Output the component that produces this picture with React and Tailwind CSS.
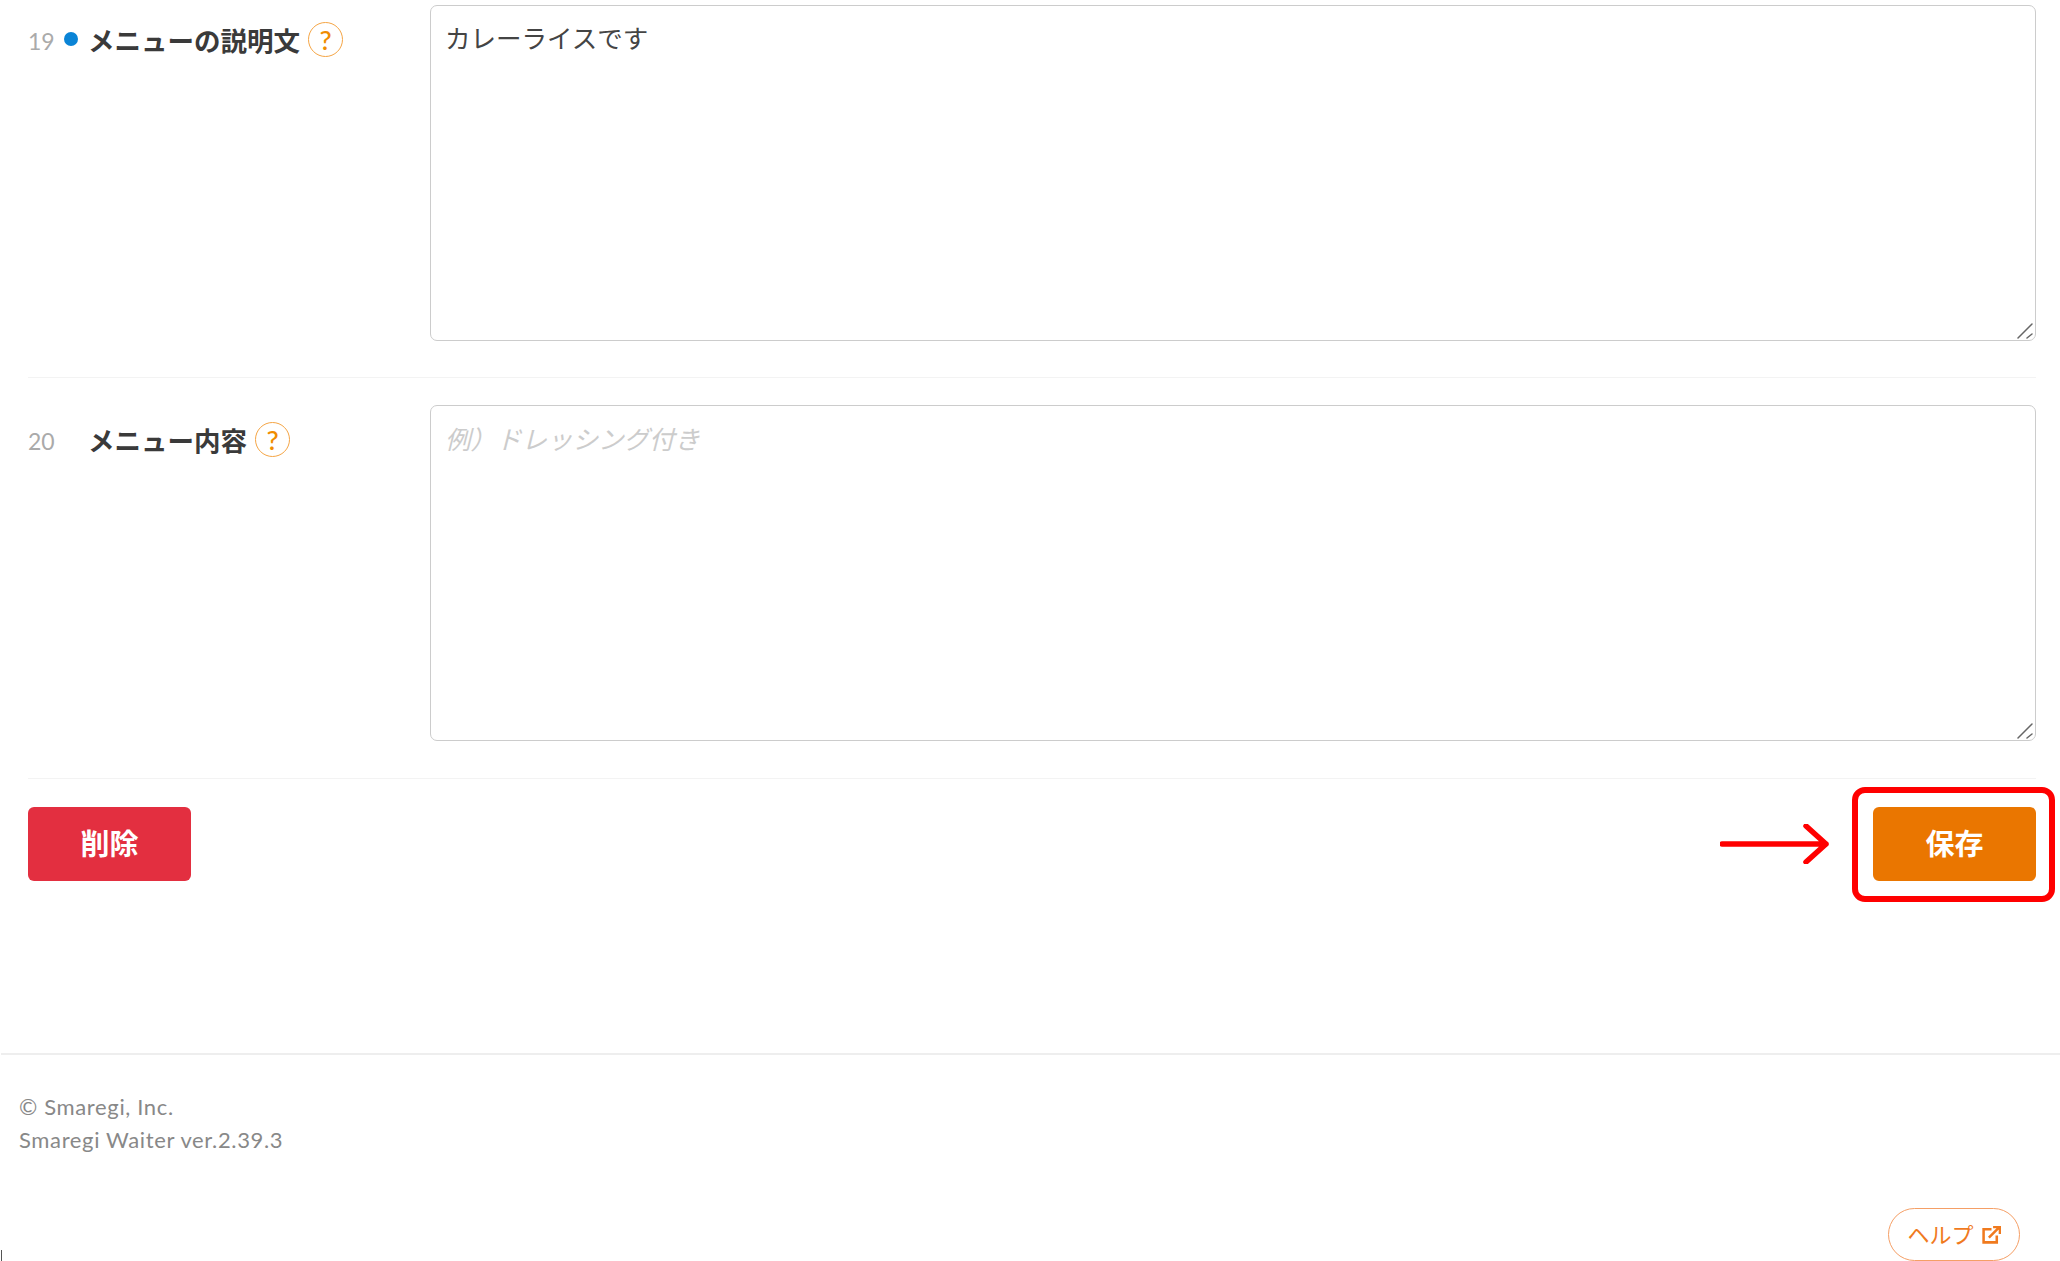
function Help() {
  return (
    <span className="inline-flex h-[35px] w-[35px] items-center justify-center rounded-full border border-[#f5a545] text-[27px] font-medium leading-none text-[#f08c00]">?</span>
  );
}

function Row({ num, dot, label, value, placeholder, rowClass, fieldClass }) {
  return (
    <div className={rowClass}>
      <div className="flex w-[402px] shrink-0 items-start pt-[18px]">
        <span className="w-[27px] text-[23px] leading-[36px] text-[#aaaaaa]">{num}</span>
        <span className="flex w-[37px] pt-[9px] pl-[9px]">
          {dot && <span className="h-[14px] w-[14px] rounded-full bg-[#0a84d6]"></span>}
        </span>
        <span className="-ml-[4px] text-[26.5px] font-bold leading-[36px] text-[#3a3a3a]">{label}</span>
        <span className="ml-[8px] -mt-[1px]"><Help /></span>
      </div>
      <div className="relative flex-1">
        <textarea
          readOnly
          defaultValue={value}
          placeholder={placeholder}
          className={fieldClass}
        />
        <svg className="absolute bottom-[2px] right-[3px]" width="16" height="16" viewBox="0 0 16 16" fill="none" stroke="#666666" strokeWidth="1.5" strokeLinecap="round">
          <path d="M1 15L15 1M10 15l5-4" />
        </svg>
      </div>
    </div>
  );
}

export default function App() {
  const field = "block h-[336px] w-full resize-none rounded-[7px] border border-[#cccccc] pl-[14px] pr-[15px] text-[25.5px] leading-[36px] text-[#444444] outline-none placeholder:italic placeholder:text-[#cccccc]";
  return (
    <div className="relative h-[1261px] w-full overflow-hidden bg-white font-['Lato','Noto_Sans_CJK_JP',sans-serif]">
      <div className="flex flex-col gap-[27px] pl-[28px] pr-[24px] pt-[5px]">
        <Row
          num="19"
          dot
          label="メニューの説明文"
          value="カレーライスです"
          rowClass="flex border-b border-[#f3f3f3] pb-[36px]"
          fieldClass={field + " py-[14px]"}
        />
        <Row
          num="20"
          label="メニュー内容"
          placeholder="例）ドレッシング付き"
          rowClass="flex border-b border-[#f3f3f3] pb-[37px]"
          fieldClass={field + " py-[15px]"}
        />
        <div className="flex items-center justify-between pt-px">
          <button className="h-[74px] w-[163px] rounded-[6px] bg-[#e32f40] text-[29px] font-bold text-white">削除</button>
          <div className="relative">
            <button className="h-[74px] w-[163px] rounded-[6px] bg-[#ea7600] text-[29px] font-bold text-white">保存</button>
            <div className="absolute -top-[20px] -right-[19px] -bottom-[21px] -left-[21px] rounded-[13px] border-[6px] border-[#ff0000]"></div>
            <svg className="absolute -left-[153px] top-[17px]" width="112" height="40" viewBox="0 0 112 40" fill="none" stroke="#ff0000" strokeWidth="5.5" strokeLinecap="round" strokeLinejoin="round">
              <path d="M2 20H106M86 2l20 18-20 18" />
            </svg>
          </div>
        </div>
      </div>

      <footer className="ml-px mt-[172px] border-t-2 border-[#eeeeee] pt-[35px] pl-[18px] text-[22px] leading-[33px] tracking-[0.64px] text-[#888888]">
        <div>© Smaregi, Inc.</div>
        <div>Smaregi Waiter ver.2.39.3</div>
      </footer>

      <div className="absolute bottom-0 left-px h-[11px] w-px bg-[#555555]"></div>

      <div className="absolute left-[1888px] top-[1208px] flex h-[53px] w-[132px] items-center justify-center gap-[8px] rounded-full border-[1.5px] border-[#f59f66] text-[22px] text-[#f07a1e]">
        <span>ヘルプ</span>
        <svg width="19" height="18" viewBox="0 0 18 17" fill="none" stroke="#f07a1e" strokeWidth="2.4">
          <path d="M9 3H1.5v12.5H14V9" />
          <path d="M6.5 11L16 1.5M10.5 1h6.5v6.5" />
        </svg>
      </div>
    </div>
  );
}
